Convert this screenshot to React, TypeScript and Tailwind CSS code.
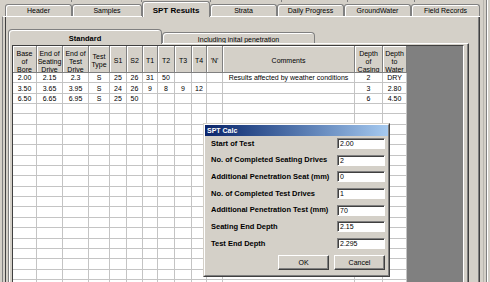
import React from 'react';

const colW = ['w-[24px]','w-[26px]','w-[26px]','w-[21px]','w-[17px]','w-[16px]','w-[15px]','w-[17px]','w-[17px]','w-[15px]','w-[16px]','w-[132px]','w-[28px]','w-[24px]'];

const headers: string[][] = [
  ['Base','of','Bore'],
  ['End of','Seating','Drive'],
  ['End of','Test','Drive'],
  ['Test','Type'],
  ['S1'],['S2'],['T1'],['T2'],['T3'],['T4'],["'N'"],
  ['Comments'],
  ['Depth','of','Casing'],
  ['Depth','to','Water'],
];

const data: string[][] = [
  ['2.00','2.15','2.3','S','25','26','31','50','','','','Results affected by weather conditions','2','DRY'],
  ['3.50','3.65','3.95','S','24','26','9','8','9','12','','','3','2.80'],
  ['6.50','6.65','6.95','S','25','50','','','','','','','6','4.50'],
];
const rows: string[][] = [...data, ...Array.from({ length: 19 }, () => Array(14).fill(''))];

const mainTabs = [
  { label: 'Header', w: 'w-[67px]' },
  { label: 'Samples', w: 'w-[70px]' },
  { label: 'SPT Results', w: 'w-[68px]', sel: true },
  { label: 'Strata', w: 'w-[67px]' },
  { label: 'Daily Progress', w: 'w-[67px]' },
  { label: 'GroundWater', w: 'w-[67px]' },
  { label: 'Field Records', w: 'w-[69px]' },
];

const fields = [
  { label: 'Start of Test', value: '2.00' },
  { label: 'No. of Completed Seating Drives', value: '2' },
  { label: 'Additional Penetration Seat (mm)', value: '0' },
  { label: 'No. of Completed Test Drives', value: '1' },
  { label: 'Additional Penetration Test (mm)', value: '70' },
  { label: 'Seating End Depth', value: '2.15' },
  { label: 'Test End Depth', value: '2.295' },
];

function MainTab({ label, w, sel }: { label: string; w: string; sel?: boolean }) {
  if (sel) {
    return (
      <div className={`${w} h-[16px] shrink-0 relative z-10 translate-y-[1px] bg-[#d4d0c8] rounded-t-[3px] border border-b-0 border-[#808080] shadow-[inset_1px_1px_0_#ffffff] flex items-center justify-center pt-[2px] font-bold text-[8px] leading-none`}>
        {label}
      </div>
    );
  }
  return (
    <div className={`${w} h-[12px] shrink-0 rounded-t-[3px] border border-b-0 border-[#808080] shadow-[inset_1px_1px_0_#ffffff] flex items-center justify-center text-[7px] leading-none`}>
      {label}
    </div>
  );
}

export default function App() {
  return (
    <div className="relative w-[490px] h-[282px] overflow-hidden bg-[#d4d0c8] text-black font-['Liberation_Sans',Arial,sans-serif] flex">
      {/* main column */}
      <div className="w-[480px] h-full flex flex-col">
        {/* back tab row remnants */}
        <div className="h-[2px] shrink-0 flex">
          <div className="w-[72px] border-r border-[#808080]" />
          <div className="w-[70px] border-r border-[#808080]" />
          <div className="w-[69px] border-r border-[#808080]" />
          <div className="w-[71px] border-r border-[#808080]" />
          <div className="w-[66px] border-r border-[#808080]" />
          <div className="w-[67px] border-r border-[#808080]" />
        </div>
        {/* main tabs */}
        <div className="h-[14px] shrink-0 flex items-end pl-[5px]">
          {mainTabs.map((t) => (
            <MainTab key={t.label} label={t.label} w={t.w} sel={t.sel} />
          ))}
        </div>
        {/* outer panel */}
        <div className="flex-1 min-h-0 ml-[2px] w-[478px] border-l border-t border-l-[#808080] border-t-white shadow-[inset_-1px_0_0_#404040,inset_-2px_0_0_#808080] pl-[2px] flex">
          <div className="w-[464px] h-full border-l border-[#404040] pl-[2px] flex flex-col">
            {/* inner tabs */}
            <div className="h-[14px] mt-[12px] shrink-0 flex items-end">
              <div className="w-[154px] h-[15px] shrink-0 relative z-10 translate-y-[1px] bg-[#d4d0c8] rounded-t-[4px] border border-b-0 border-[#808080] shadow-[inset_1px_1px_0_#ffffff] flex items-center justify-center pt-[3px] font-bold text-[7.5px] leading-none">
                Standard
              </div>
              <div className="w-[153px] h-[11px] shrink-0 rounded-t-[4px] border border-b-0 border-[#808080] shadow-[inset_1px_1px_0_#ffffff] flex items-center justify-center pt-[2px] text-[7px] leading-none">
                Including inital penetration
              </div>
            </div>
            {/* inner panel */}
            <div className="flex-1 min-h-0 w-[461px] border-l border-r border-t border-l-[#808080] border-r-[#404040] border-t-white flex">
              <div className="w-[459px] h-full border-l border-r border-l-white border-r-[#808080] pl-[2px] pr-[3px] pt-[1px] flex">
                <div className="w-[452px] h-full border-l border-t border-r border-l-[#404040] border-t-[#404040] border-r-white flex overflow-hidden">
                  <div className="w-[394px] shrink-0 flex flex-col bg-white">
                    <div className="h-[27px] shrink-0 flex border-b border-[#808080]">
                      {headers.map((h, i) => (
                        <div
                          key={i}
                          className={`${colW[i]} shrink-0 h-full bg-[#d4d0c8] border-r border-[#808080] shadow-[inset_1px_1px_0_#ffffff] flex flex-col items-center justify-center overflow-hidden text-[7px] leading-[8px] whitespace-nowrap ${h.length === 3 ? 'pt-[6px]' : 'pt-[4px]'}`}
                        >
                          {h.map((l, j) => (
                            <span key={j}>{l}</span>
                          ))}
                        </div>
                      ))}
                    </div>
                    {rows.map((r, ri) => (
                      <div key={ri} className="h-[10.35px] shrink-0 flex border-b border-[#c4c4c4]">
                        {r.map((c, ci) => (
                          <div
                            key={ci}
                            className={`${colW[ci]} shrink-0 h-full border-r border-[#c4c4c4] flex items-center justify-center overflow-hidden whitespace-nowrap text-[7px] leading-none`}
                          >
                            {c}
                          </div>
                        ))}
                      </div>
                    ))}
                  </div>
                  <div className="w-[56px] shrink-0 h-full bg-[#808080]" />
                </div>
              </div>
            </div>
          </div>
        </div>
      </div>
      {/* right window edge */}
      <div className="w-[10px] h-full flex">
        <div className="w-[3px]" />
        <div className="w-[1px] bg-[#b8b5ae]" />
        <div className="w-[2px]" />
        <div className="w-[1px] bg-[#808080]" />
        <div className="w-[1px] bg-white" />
      </div>

      {/* SPT Calc dialog */}
      <div className="absolute left-[203px] top-[123px] w-[187px] h-[154px] z-20 bg-[#d4d0c8] border border-t-[#d4d0c8] border-l-[#d4d0c8] border-r-[#404040] border-b-[#404040]">
        <div className="h-full border border-t-white border-l-white border-r-[#808080] border-b-[#808080] flex flex-col">
          <div className="h-[11px] shrink-0 bg-linear-to-r from-[#0a246a] to-[#a6caf0] flex items-center pl-[2px] text-white font-bold text-[7px] leading-none">
            SPT Calc
          </div>
          <div className="flex flex-col pt-[2px] pl-[6px] pr-[3px]">
            {fields.map((f) => (
              <div key={f.label} className="h-[16.67px] shrink-0 flex items-start justify-between">
                <span className="h-[11px] flex items-center font-bold text-[7.5px] leading-none whitespace-nowrap">{f.label}</span>
                <div className="w-[48px] h-[11px] bg-white border border-t-[#808080] border-l-[#808080] border-r-white border-b-white shadow-[inset_1px_1px_0_#404040] flex items-center pl-[2px] text-[7px] leading-none">
                  {f.value}
                </div>
              </div>
            ))}
            <div className="h-[15px] flex justify-end gap-[5px]">
              <div className="w-[51px] h-[15px] border border-t-white border-l-white border-r-[#404040] border-b-[#404040] shadow-[inset_-1px_-1px_0_#808080] flex items-center justify-center text-[7px] leading-none">
                OK
              </div>
              <div className="w-[51px] h-[15px] border border-t-white border-l-white border-r-[#404040] border-b-[#404040] shadow-[inset_-1px_-1px_0_#808080] flex items-center justify-center text-[7px] leading-none">
                Cancel
              </div>
            </div>
          </div>
        </div>
      </div>
    </div>
  );
}
